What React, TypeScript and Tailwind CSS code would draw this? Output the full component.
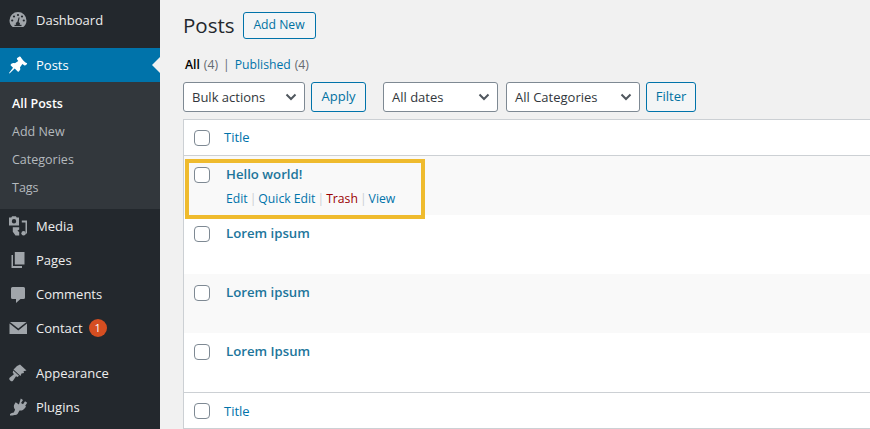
import type { ReactNode } from 'react';

const font = "[font-family:'Open_Sans','Noto_Sans',sans-serif]";

function Dashboard() {
  return (
    <svg viewBox="0 0 20 20" className="h-5 w-5 fill-[#a0a5aa]">
      <path d="M10 2a8.5 8.5 0 0 0-8.5 8.5c0 2.7 1.2 5 3.2 6.5h10.600c2-1.500 3.200-3.800 3.200-6.500A8.500 8.500 0 0 0 10 2z" />
      <g className="fill-[#23282d]">
        <circle cx="10" cy="5" r="1.100" />
        <circle cx="6" cy="6.500" r="1.100" />
        <circle cx="14" cy="6.500" r="1.100" />
        <circle cx="4.200" cy="10.500" r="1.100" />
        <circle cx="15.800" cy="10.500" r="1.100" />
        <path d="M11.600 7.500 10.700 12.200a1.900 1.900 0 1 1-1.400-.1l1.300-4.600z" />
        <rect x="6.500" y="14.800" width="7" height="1.300" />
      </g>
    </svg>
  );
}

function Pin() {
  return (
    <svg viewBox="0 0 20 20" className="h-5 w-5 fill-white">
      <path d="M11.500 1.500c.6-.2 1 .1 1.300.6.500 1.100 1.600 2.600 2.700 3.700 1.100 1.100 2.300 2 3.200 2.300.5.200.6.800.2 1.200l-1.400 1c-.5.300-1 .2-1.400-.1l-1.700-1.200-2.500 3.400c.6 1 .5 2.300-.3 3.200l-.8.800c-.3.400-.8.400-1.100 0l-3-3L1.500 18.500 1 18l4-5.200-2.200-2.300c-.4-.4-.4-.8 0-1.100l.9-.8c.9-.8 2.200-.9 3.200-.3L10.300 6.100 9.100 4.400c-.3-.5-.3-1 .1-1.300z" />
    </svg>
  );
}

function Media() {
  return (
    <svg viewBox="0 0 20 20" className="h-5 w-5 fill-[#a0a5aa]">
      <path fillRule="evenodd" d="M1 1.500h2.300l.8-1.200h3.800l.8 1.200h2.300v8H1zM6 3a2.200 2.200 0 1 0 0 4.400A2.200 2.200 0 0 0 6 3z" />
      <path d="M13.800 4.500H19v13h-1.500V6.500h-3.700z" />
      <circle cx="15.600" cy="17.200" r="2.200" />
      <path d="M4.800 11.200h6.400v2.300l-1.800 1.300 1.800 1.200v3.500H7.500l-2.700-3.800z" />
    </svg>
  );
}

function Pages() {
  return (
    <svg viewBox="0 0 20 20" className="h-5 w-5 fill-[#a0a5aa]">
      <path d="M6.800 2H16.500v12.500H6.800z" />
      <path d="M3.500 5H5v11h9v2H3.500z" />
    </svg>
  );
}

function Comments() {
  return (
    <svg viewBox="0 0 20 20" className="h-5 w-5 fill-[#a0a5aa]">
      <path d="M4.500 3h11A1.500 1.500 0 0 1 17 4.500v9a1.500 1.500 0 0 1-1.500 1.500h-3L8 19v-4H4.500A1.500 1.500 0 0 1 3 13.500v-9A1.500 1.500 0 0 1 4.500 3z" />
    </svg>
  );
}

function Mail() {
  return (
    <svg viewBox="0 0 20 20" className="h-5 w-5 fill-[#a0a5aa]">
      <path d="M2 4h16.500l-8.200 6.500z" />
      <path d="M1.500 5.500 10.300 12.500 19 5.500V16H1.500z" />
    </svg>
  );
}

function Brush() {
  return (
    <svg viewBox="0 0 20 20" className="h-5 w-5 fill-[#a0a5aa]">
      <path d="M9 3 12 1.500l6.500 6-3 .8.500 1.700-2.500.5-1 2.500L5.500 6.500z" />
      <path d="M5.200 7.500 11 12.800l-1.500 1.200-1.500-.8-3 4.500c-.7.800-1.800.800-2.500.1L1.700 17c-.7-.8-.6-1.900.2-2.500l4-3.300-1.200-1.700z" />
    </svg>
  );
}

function Plug() {
  return (
    <svg viewBox="0 0 20 20" className="h-5 w-5 fill-[#a0a5aa]">
      <path d="M12.800 1.500 15 3l-2 3 2 1.300 2-3 2.200 1.500-2 3 .8.600-1 1.600c-1.400 2-3.500 2.900-5.500 2.500L9.500 17c-.8.800-2 1.200-3 .9l-2 .6H2v-1.500l1.800-1 2-.6 1.300-2.700C5.700 11.200 5.300 8.700 6.700 6.800l1-1.600 3.200 2.200z" />
    </svg>
  );
}

function MenuRow({ icon, label, active, badge, className }: { icon: ReactNode; label: string; active?: boolean; badge?: string; className?: string }) {
  return (
    <div className={`relative flex h-[34px] items-center pl-[8px] text-[13px] ${active ? 'bg-[#0073aa] text-white' : 'text-[#eeeeee]'} ${className ?? ''}`}>
      <span className="flex w-[28px] justify-start">{icon}</span>
      <span className="pt-[2px]">{label}</span>
      {badge && (
        <span className="ml-[6px] flex h-[18px] w-[18px] items-center justify-center rounded-full bg-[#d54e21] text-[11px] text-white">{badge}</span>
      )}
      {active && (
        <span className="absolute right-0 top-1/2 h-0 w-0 -translate-y-1/2 border-y-[8px] border-r-[8px] border-y-transparent border-r-[#f1f1f1]" />
      )}
    </div>
  );
}

function Btn({ children, className }: { children: ReactNode; className?: string }) {
  return (
    <button className={`flex items-center justify-center rounded-[3px] border border-[#0073aa] bg-[#f3f5f6] text-[#0071a1] ${className ?? ''}`}>
      {children}
    </button>
  );
}

function Select({ label, className }: { label: string; className?: string }) {
  return (
    <div className={`flex h-[30px] items-center justify-between rounded-[3px] border border-[#7e8993] bg-white pl-[8px] pr-[7px] text-[13px] text-[#32373c] ${className ?? ''}`}>
      <span className="pt-[1px]">{label}</span>
      <svg viewBox="0 0 12 8" className="h-[8px] w-[12px] fill-none stroke-[#50575e] stroke-[2]">
        <path d="M1.500 1.500 6 6l4.500-4.500" />
      </svg>
    </div>
  );
}

function Check() {
  return <span className="block h-4 w-4 shrink-0 rounded-[4px] border border-[#7e8993] bg-white" />;
}

function HeadRow({ className }: { className?: string }) {
  return (
    <div className={`flex h-[36px] items-center pl-[10px] ${className ?? ''}`}>
      <Check />
      <span className="ml-[14px] pt-[1px] text-[13px] text-[#0073aa]">Title</span>
    </div>
  );
}

function PostRow({ title, shaded, actions }: { title: string; shaded?: boolean; actions?: boolean }) {
  return (
    <div className={`flex h-[59px] pl-[10px] pt-[11px] ${shaded ? 'bg-[#f9f9f9]' : 'bg-white'}`}>
      <Check />
      <div className="ml-[16px] -mt-[3px]">
        <div className="text-[13.2px] font-semibold leading-[20px] text-[#21759b]">{title}</div>
        {actions && (
          <div className="mt-[5px] flex text-[12.2px] leading-[20px] text-[#0073aa]">
            <span>Edit</span>
            <span className="mx-[2px] text-[#ccd0d4]">|</span>
            <span>Quick Edit</span>
            <span className="mx-[2px] text-[#ccd0d4]">|</span>
            <span className="text-[#990000]">Trash</span>
            <span className="mx-[2px] text-[#ccd0d4]">|</span>
            <span>View</span>
          </div>
        )}
      </div>
    </div>
  );
}

export default function App() {
  return (
    <div className={`flex h-[429px] w-[870px] overflow-hidden bg-[#f1f1f1] ${font}`}>
      <aside className="w-[160px] shrink-0 bg-[#23282d] pt-[3px]">
        <MenuRow icon={<Dashboard />} label="Dashboard" />
        <MenuRow icon={<Pin />} label="Posts" active className="mt-[11px]" />
        <div className="flex h-[127px] flex-col bg-[#32373c] pt-[8px] text-[12.5px] text-[#b4b9be]">
          <div className="flex h-[28px] items-center pl-[12px] font-semibold text-white">All Posts</div>
          <div className="flex h-[28px] items-center pl-[12px]">Add New</div>
          <div className="flex h-[28px] items-center pl-[12px]">Categories</div>
          <div className="flex h-[28px] items-center pl-[12px]">Tags</div>
        </div>
        <MenuRow icon={<Media />} label="Media" />
        <MenuRow icon={<Pages />} label="Pages" />
        <MenuRow icon={<Comments />} label="Comments" />
        <MenuRow icon={<Mail />} label="Contact" badge="1" />
        <MenuRow icon={<Brush />} label="Appearance" className="mt-[11px]" />
        <MenuRow icon={<Plug />} label="Plugins" />
      </aside>

      <main className="relative min-w-0 flex-1 pl-[23px] pt-[12px]">
        <div className="flex items-center">
          <h1 className="text-[20.5px] leading-[27px] text-[#23282d]">Posts</h1>
          <Btn className="ml-[8px] h-[27px] w-[73px] text-[12.2px]">Add New</Btn>
        </div>
        <div className="mt-[16px] flex pl-[2px] text-[12.2px] leading-[20px] text-[#646970]">
          <span className="font-semibold text-[#000]">All</span>
          <span className="ml-[4px]">(4)</span>
          <span className="mx-[5px] text-[#646970]">|</span>
          <span className="text-[#0073aa]">Published</span>
          <span className="ml-[4px]">(4)</span>
        </div>
        <div className="mt-[7px] flex">
          <Select label="Bulk actions" className="w-[122px]" />
          <Btn className="ml-[6px] h-[30px] w-[55px] text-[13px]">Apply</Btn>
          <Select label="All dates" className="ml-[17px] w-[115px]" />
          <Select label="All Categories" className="ml-[8px] w-[134px]" />
          <Btn className="ml-[6px] h-[30px] w-[50px] text-[13px]">Filter</Btn>
        </div>
        <div className="mt-[7px] border border-r-0 border-[#ccd0d4] bg-white">
          <HeadRow className="border-b border-[#ccd0d4]" />
          <PostRow title="Hello world!" shaded actions />
          <PostRow title="Lorem ipsum" />
          <PostRow title="Lorem ipsum" shaded />
          <PostRow title="Lorem Ipsum" />
          <HeadRow className="border-t border-[#ccd0d4] pt-[1px]" />
        </div>
        <div className="absolute left-[25px] top-[159px] h-[60px] w-[240px] border-4 border-[#efbb2e]" />
      </main>
    </div>
  );
}
